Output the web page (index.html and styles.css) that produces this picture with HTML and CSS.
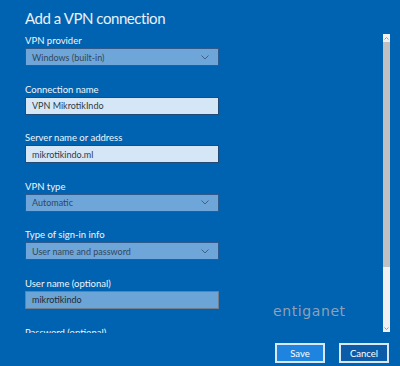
FILE: index.html
```html
<!DOCTYPE html>
<html>
<head>
    <title>Add a VPN connection</title>
    <link rel="stylesheet" href="styles.css">
</head>
<body>
    <div class="dialog">
        <h1 class="title">Add a VPN connection</h1>

        <div class="content">
            <div class="form">
                <div class="field">
                    <div class="label">VPN provider</div>
                    <div class="box select">
                        <span>Windows (built-in)</span>
                        <svg class="chev" width="8" height="5" viewBox="0 0 8 5"><polyline points="0.5,0.5 4,4 7.5,0.5" fill="none" stroke="#44607e" stroke-width="1"/></svg>
                    </div>
                </div>

                <div class="field">
                    <div class="label">Connection name</div>
                    <div class="box text">VPN MikrotikIndo</div>
                </div>

                <div class="field">
                    <div class="label">Server name or address</div>
                    <div class="box text">mikrotikindo.ml</div>
                </div>

                <div class="field">
                    <div class="label">VPN type</div>
                    <div class="box select">
                        <span>Automatic</span>
                        <svg class="chev" width="8" height="5" viewBox="0 0 8 5"><polyline points="0.5,0.5 4,4 7.5,0.5" fill="none" stroke="#44607e" stroke-width="1"/></svg>
                    </div>
                </div>

                <div class="field">
                    <div class="label">Type of sign-in info</div>
                    <div class="box select">
                        <span>User name and password</span>
                        <svg class="chev" width="8" height="5" viewBox="0 0 8 5"><polyline points="0.5,0.5 4,4 7.5,0.5" fill="none" stroke="#44607e" stroke-width="1"/></svg>
                    </div>
                </div>

                <div class="field">
                    <div class="label">User name (optional)</div>
                    <div class="box user">mikrotikindo</div>
                </div>

                <div class="field">
                    <div class="label">Password (optional)</div>
                    <div class="box text"></div>
                </div>
            </div>

            <div class="scrollbar">
                <div class="arrow">
                    <svg width="5" height="3" viewBox="0 0 5 3"><polyline points="0.5,2.5 2.5,0.5 4.5,2.5" fill="none" stroke="#9a9a9a" stroke-width="1"/></svg>
                </div>
                <div class="thumb"></div>
                <div class="track"></div>
                <div class="arrow">
                    <svg width="5" height="3" viewBox="0 0 5 3"><polyline points="0.5,0.5 2.5,2.5 4.5,0.5" fill="none" stroke="#9a9a9a" stroke-width="1"/></svg>
                </div>
            </div>

            <div class="watermark">entiganet</div>
        </div>

        <div class="footer">
            <button class="btn save">Save</button>
            <button class="btn cancel">Cancel</button>
        </div>
    </div>
</body>
</html>
```

FILE: styles.css
```css
body {
    margin: 0;
    background-color: #0063b1;
    font-family: "Lato", "Open Sans", sans-serif;
    color: #eef3f9;
}

.dialog {
    width: 400px;
    height: 366px;
    display: flex;
    flex-direction: column;
}

.title {
    margin: 0;
    padding: 7px 0 0 25px;
    height: 34px;
    box-sizing: border-box;
    font-size: 15px;
    font-weight: 400;
    letter-spacing: -0.45px;
    line-height: 22px;
    color: #e8f0f8;
}

.content {
    position: relative;
    height: 299px;
    display: flex;
    overflow: hidden;
}

.form {
    flex: 1;
    padding: 1px 0 0 25px;
}

.field {
    margin-bottom: 17.6px;
}

.label {
    font-size: 9.5px;
    line-height: 12px;
    margin-bottom: 1px;
    color: #f0f5fa;
}

.box {
    width: 194px;
    height: 18px;
    box-sizing: border-box;
    display: flex;
    align-items: center;
    justify-content: space-between;
    padding: 0 9px 0 6px;
    font-size: 9px;
}

.select {
    background-color: #6ea6d9;
    border: 1px solid #2e5b8c;
    color: #33465c;
}

.text {
    background-color: #d5e7f6;
    border: 1px solid #234a75;
    color: #2f3a46;
}

.user {
    background-color: #6ba4d7;
    border: 1px solid #6f7f90;
    color: #1f2a36;
}

.chev {
    display: block;
}

.scrollbar {
    width: 7px;
    margin-right: 10px;
    display: flex;
    flex-direction: column;
    background-color: #f1f1f1;
    height: 298px;
}

.arrow {
    height: 8px;
    display: flex;
    align-items: center;
    justify-content: center;
    background-color: #f1f1f1;
}

.arrow svg {
    display: block;
}

.thumb {
    height: 225px;
    background-color: #c1c1c1;
}

.track {
    flex: 1;
}

.watermark {
    position: absolute;
    left: 273px;
    top: 269px;
    font-family: "DejaVu Sans", sans-serif;
    font-size: 14px;
    letter-spacing: 0.6px;
    color: #8ea0b6;
}

.footer {
    display: flex;
    justify-content: flex-end;
    gap: 14px;
    padding: 10px 11px 0 0;
}

.btn {
    width: 50px;
    height: 20px;
    padding: 0;
    font-family: "Lato", "Open Sans", sans-serif;
    font-size: 9.5px;
    color: #ffffff;
    border: 2px solid #d8e8f6;
}

.save {
    background-color: #1f84e0;
}

.cancel {
    background-color: #0b5ba8;
}
```
